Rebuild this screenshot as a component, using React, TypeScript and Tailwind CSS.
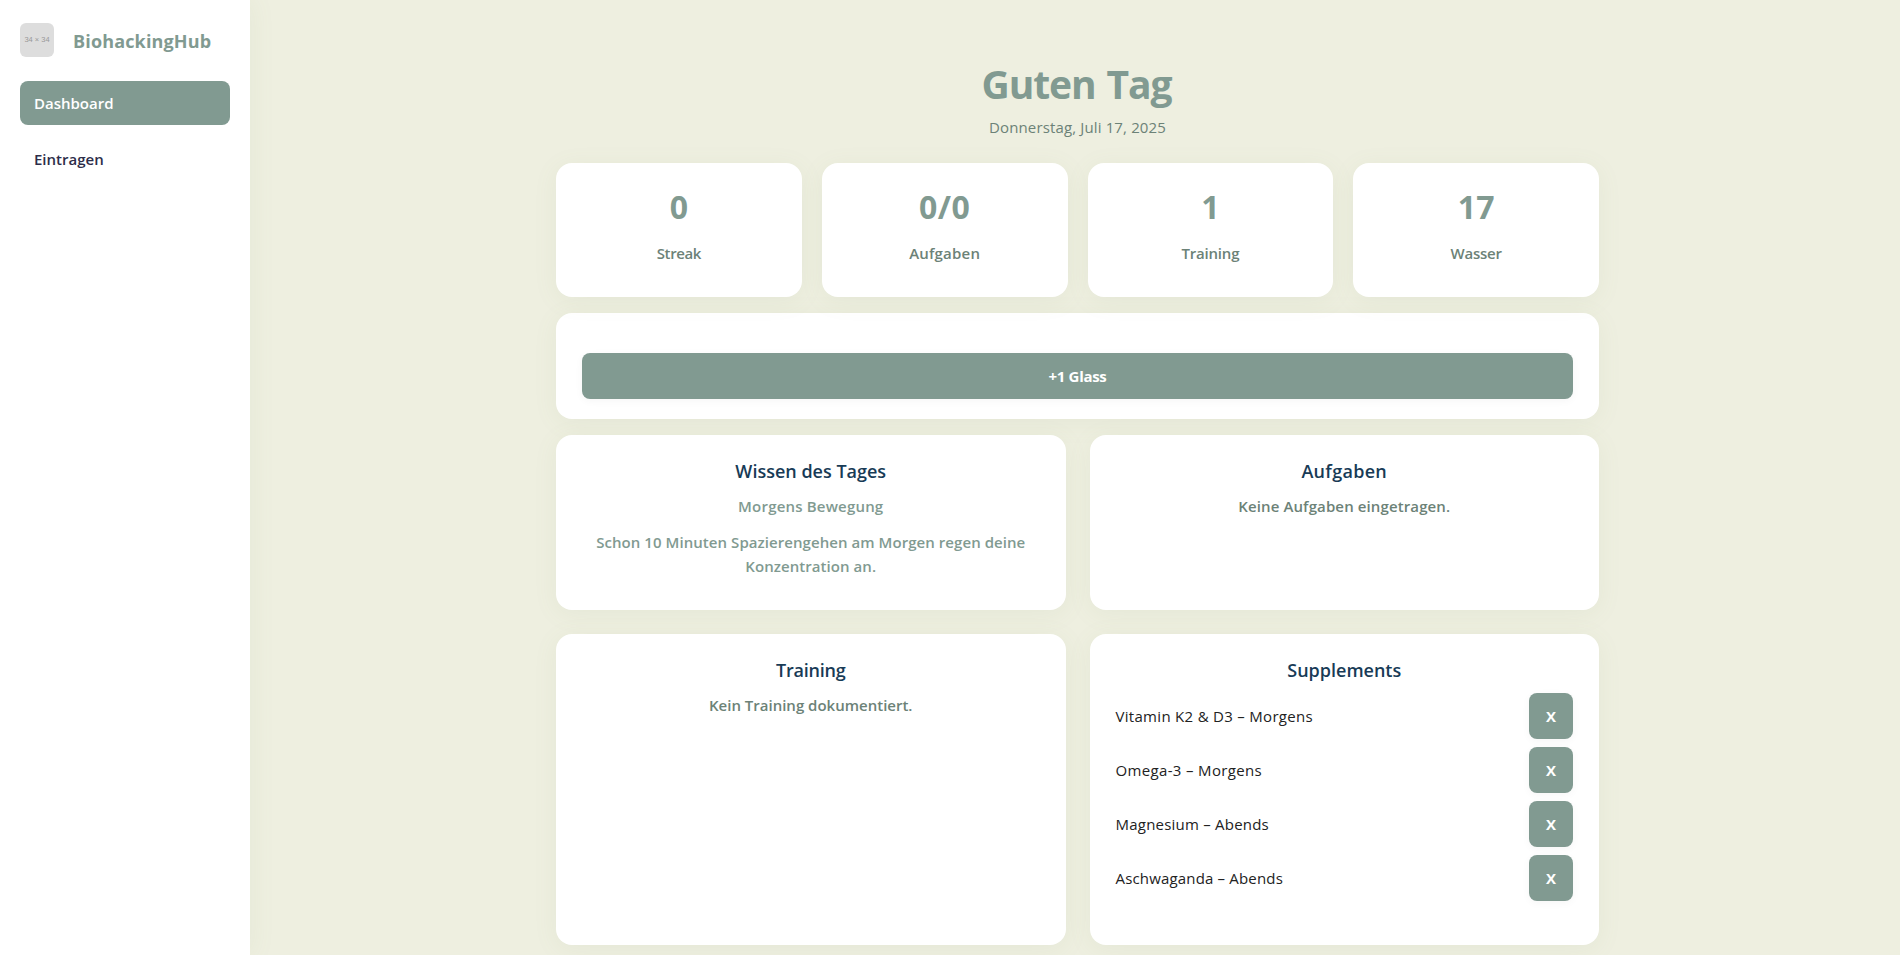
import type { ReactNode } from "react";
import clsx from "clsx";

type Stat = { value: string; label: string; valueClass: string; labelClass: string };

const stats: Stat[] = [
  { value: "0", label: "Streak", valueClass: "", labelClass: "tracking-[-0.4px]" },
  { value: "0/0", label: "Aufgaben", valueClass: "tracking-[0.5px]", labelClass: "tracking-[0.2px]" },
  { value: "1", label: "Training", valueClass: "", labelClass: "tracking-[-0.2px]" },
  { value: "17", label: "Wasser", valueClass: "", labelClass: "tracking-[-0.2px]" },
];

const supplements = [
  { text: "Vitamin K2 & D3 – Morgens", className: "tracking-[0.3px]" },
  { text: "Omega-3 – Morgens", className: "tracking-[0.34px]" },
  { text: "Magnesium – Abends", className: "tracking-[0.22px]" },
  { text: "Aschwaganda – Abends", className: "tracking-[0.17px]" },
];

function Card({ className, children }: { className?: string; children: ReactNode }) {
  return (
    <section className={clsx("rounded-2xl bg-white shadow-[0_4px_24px_rgba(129,154,100,0.08)]", className)}>
      {children}
    </section>
  );
}

function CardTitle({ className, children }: { className?: string; children: ReactNode }) {
  return (
    <h2 className={clsx("text-center text-[18px] leading-7 font-semibold text-[#183b56]", className)}>{children}</h2>
  );
}

function Button({ className, children }: { className?: string; children: ReactNode }) {
  return (
    <button
      className={clsx(
        "h-[46px] rounded-lg bg-[#819a91] font-bold text-white shadow-[0_2px_8px_rgba(0,0,0,0.04)]",
        className,
      )}
    >
      {children}
    </button>
  );
}

export default function App() {
  return (
    <div className="flex h-[955px] w-full overflow-hidden bg-[#eeefe0] font-['Open_Sans',sans-serif] text-[15px] leading-6">
      <aside className="relative w-[250px] shrink-0 bg-white px-5 pt-[23px] shadow-[2px_0_24px_rgba(129,154,100,0.07)]">
        <div className="flex items-center gap-[19px]">
          <div className="flex size-[34px] items-center justify-center rounded-md bg-[#dddddd] font-['Liberation_Sans',sans-serif] text-[7.5px] leading-none text-[#999999]">
            34 × 34
          </div>
          <span className="pt-0.5 text-[18px] leading-7 font-bold tracking-[0.15px] text-[#819a91]">BiohackingHub</span>
        </div>
        <nav className="mt-6 flex flex-col gap-3">
          <a className="flex h-11 items-center rounded-lg bg-[#819a91] px-3.5 font-semibold text-white">Dashboard</a>
          <a className="flex h-11 items-center rounded-lg px-3.5 font-semibold text-[#2d2d4a]">Eintragen</a>
        </nav>
      </aside>

      <main className="flex-1 pt-[60px] pl-[306px]">
        <div className="w-[1043px]">
          <header className="text-center">
            <h1 className="pr-0.5 text-[39px] leading-12 font-bold tracking-[-1.1px] [word-spacing:2px] text-[#819a91]">
              Guten Tag
            </h1>
            <p className="mt-[7px] tracking-[0.14px] text-[#6c8277]">Donnerstag, Juli 17, 2025</p>
          </header>

          <div className="mt-6 grid grid-cols-4 gap-5">
            {stats.map((s) => (
              <Card key={s.label} className="h-[134px] pt-5 text-center">
                <div className={clsx("text-[32px] leading-12 font-bold text-[#819a91]", s.valueClass)}>{s.value}</div>
                <div className={clsx("mt-2.5 font-semibold text-[#6c8277]", s.labelClass)}>{s.label}</div>
              </Card>
            ))}
          </div>

          <Card className="mt-4 h-[106px] px-[26px] pt-10">
            <Button className="w-full tracking-[-0.3px]">+1 Glass</Button>
          </Card>

          <div className="mt-4 grid grid-cols-2 gap-6">
            <Card className="h-[175px] px-[26px] pt-[22px] text-center font-semibold text-[#819a91]">
              <CardTitle>Wissen des Tages</CardTitle>
              <p className="mt-[9px] tracking-[0.19px]">Morgens Bewegung</p>
              <p className="mt-3 tracking-[0.06px]">
                Schon 10 Minuten Spazierengehen am Morgen regen deine Konzentration an.
              </p>
            </Card>
            <Card className="h-[175px] px-[26px] pt-[22px] text-center font-semibold text-[#6c8277]">
              <CardTitle className="tracking-[0.3px]">Aufgaben</CardTitle>
              <p className="mt-[9px] tracking-[0.12px]">Keine Aufgaben eingetragen.</p>
            </Card>
            <Card className="h-[311px] px-[26px] pt-[22px] text-center font-semibold text-[#6c8277]">
              <CardTitle className="tracking-[-0.2px]">Training</CardTitle>
              <p className="mt-[9px]">Kein Training dokumentiert.</p>
            </Card>
            <Card className="h-[311px] px-[26px] pt-[22px]">
              <CardTitle>Supplements</CardTitle>
              <ul className="mt-[9px] flex flex-col gap-2 text-[#222222]">
                {supplements.map((s) => (
                  <li key={s.text} className="flex items-center justify-between">
                    <span className={s.className}>{s.text}</span>
                    <Button className="w-11">X</Button>
                  </li>
                ))}
              </ul>
            </Card>
          </div>
        </div>
      </main>
    </div>
  );
}
